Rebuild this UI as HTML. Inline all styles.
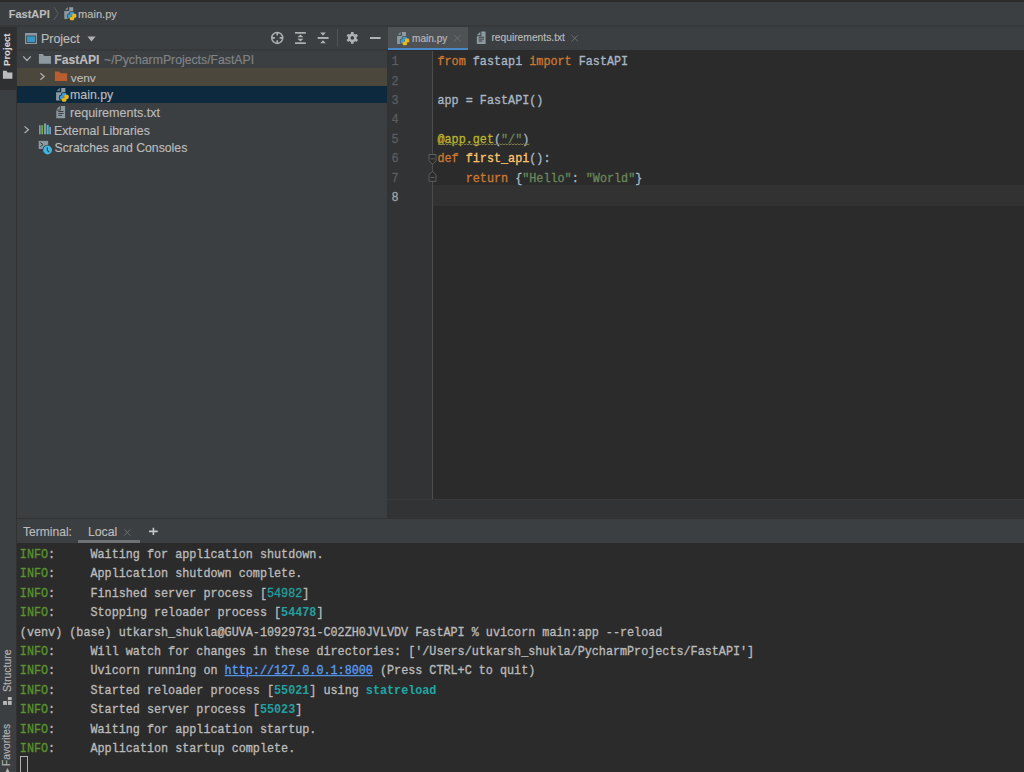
<!DOCTYPE html>
<html><head><meta charset="utf-8">
<style>
*{margin:0;padding:0;box-sizing:border-box}
html,body{width:1024px;height:772px;overflow:hidden;background:#3c3f41;font-family:"Liberation Sans",sans-serif;position:relative}
.r{position:absolute}
.t{position:absolute;line-height:0;white-space:pre;font-family:"Liberation Sans",sans-serif;-webkit-text-stroke:0.15px currentColor}
.m{position:absolute;white-space:pre;font-family:"Liberation Mono",monospace;font-size:11.78px;transform-origin:0 0;-webkit-text-stroke:0.3px currentColor}
.ln{color:#5a5d60}
.kw{color:#cc7832}
.tx{color:#a9b7c6}
.st{color:#6a8759}
.dec{color:#bbb529}
.fn{color:#ffc66d}
.info{color:#5a922d}
.tt{color:#bbbbbb}
.cy{color:#22a0a0;font-weight:bold;-webkit-text-stroke:0}
.cyr{color:#22a0a0}
.cyb{color:#1fa6a6;font-weight:bold;-webkit-text-stroke:0}
.lk{color:#589df6;text-decoration:underline}
svg{position:absolute;left:0;top:0}
</style></head><body>
<div class="r" style="left:0px;top:0px;width:1024px;height:2px;background:#2b2b2b;"></div>
<div class="r" style="left:0px;top:2px;width:1024px;height:23px;background:#3c3f41;"></div>
<div class="r" style="left:0px;top:26px;width:16px;height:746px;background:#3c3f41;"></div>
<div class="r" style="left:0px;top:27px;width:16px;height:63px;background:#2e3031;"></div>
<div class="r" style="left:16px;top:26px;width:1px;height:746px;background:#323232;"></div>
<div class="r" style="left:386px;top:26px;width:1px;height:492px;background:#323232;"></div>
<div class="r" style="left:17px;top:26px;width:370px;height:492px;background:#3c3f41;"></div>
<div class="r" style="left:17px;top:49px;width:370px;height:2px;background:#363839;"></div>
<div class="r" style="left:17px;top:68px;width:370px;height:18px;background:#4b473d;"></div>
<div class="r" style="left:17px;top:86px;width:370px;height:17px;background:#0d293e;"></div>
<div class="r" style="left:387px;top:26px;width:637px;height:492px;background:#2b2b2b;"></div>
<div class="r" style="left:387px;top:26px;width:637px;height:24px;background:#3c3f41;"></div>
<div class="r" style="left:388px;top:27px;width:80px;height:23px;background:#4e5254;"></div>
<div class="r" style="left:388px;top:47.8px;width:80px;height:2.7px;background:#4a88c7;"></div>
<div class="r" style="left:387px;top:50.5px;width:46px;height:448.5px;background:#313335;"></div>
<div class="r" style="left:432px;top:50.5px;width:1px;height:448.5px;background:#4a4c4e;"></div>
<div class="r" style="left:433px;top:185px;width:591px;height:21px;background:#323232;"></div>
<div class="r" style="left:387px;top:499px;width:637px;height:1px;background:#37393b;"></div>
<div class="r" style="left:387px;top:500px;width:637px;height:18px;background:#323335;"></div>
<div class="r" style="left:0px;top:25px;width:1024px;height:2px;background:#363839;"></div>
<div class="r" style="left:17px;top:518px;width:1007px;height:1px;background:#323232;"></div>
<div class="r" style="left:17px;top:519px;width:1007px;height:24px;background:#3c3f41;"></div>
<div class="r" style="left:17px;top:543px;width:1007px;height:229px;background:#2b2b2b;"></div>
<div class="r" style="left:78px;top:540px;width:62px;height:3px;background:#6e7275;"></div>
<div class="t" style="left:8.74px;top:13.69px;font-size:11.0px;color:#bbbbbb;font-weight:bold;">FastAPI</div>
<div class="t" style="left:78.09px;top:13.76px;font-size:11.07px;color:#bbbbbb;">main.py</div>
<div class="t" style="left:40.90px;top:39.02px;font-size:12.5px;color:#bbbbbb;">Project</div>
<div class="t" style="left:54.27px;top:60.29px;font-size:12.13px;color:#bbbbbb;font-weight:bold;">FastAPI</div>
<div class="t" style="left:104.01px;top:60.25px;font-size:12.25px;color:#808487;">~/PycharmProjects/FastAPI</div>
<div class="t" style="left:70.75px;top:77.90px;font-size:11.84px;color:#bbbbbb;">venv</div>
<div class="t" style="left:70.01px;top:95.47px;font-size:12.35px;color:#bbbbbb;">main.py</div>
<div class="t" style="left:70.00px;top:112.85px;font-size:12.55px;color:#bbbbbb;">requirements.txt</div>
<div class="t" style="left:54.01px;top:130.53px;font-size:12.32px;color:#bbbbbb;">External Libraries</div>
<div class="t" style="left:54.51px;top:148.45px;font-size:12.26px;color:#bbbbbb;">Scratches and Consoles</div>
<div class="t" style="left:412.00px;top:38.61px;font-size:10.08px;color:#bbbbbb;">main.py</div>
<div class="t" style="left:491.38px;top:38.14px;font-size:10.28px;color:#bbbbbb;">requirements.txt</div>
<div class="t" style="left:23.06px;top:531.62px;font-size:12.05px;color:#bbbbbb;">Terminal:</div>
<div class="t" style="left:87.90px;top:531.54px;font-size:12.3px;color:#bbbbbb;">Local</div>
<div class="t" style="left:6.77px;top:65.58px;font-size:9.59px;color:#d4d4d4;font-weight:bold;transform:rotate(-90deg);transform-origin:0 0">Project</div>
<div class="t" style="left:7.09px;top:691.72px;font-size:10.53px;color:#b4b4b4;transform:rotate(-90deg);transform-origin:0 0">Structure</div>
<div class="t" style="left:7.00px;top:765.82px;font-size:10.24px;color:#b4b4b4;transform:rotate(-90deg);transform-origin:0 0">Favorites</div>
<div class="m ln" style="left:391.5px;top:62.27px;line-height:0;transform:scaleY(1.1);transform-origin:0 3.135px">1</div>
<div class="m ln" style="left:391.5px;top:81.67px;line-height:0;transform:scaleY(1.1);transform-origin:0 3.135px">2</div>
<div class="m ln" style="left:391.5px;top:101.07px;line-height:0;transform:scaleY(1.1);transform-origin:0 3.135px">3</div>
<div class="m ln" style="left:391.5px;top:120.47px;line-height:0;transform:scaleY(1.1);transform-origin:0 3.135px">4</div>
<div class="m ln" style="left:391.5px;top:139.87px;line-height:0;transform:scaleY(1.1);transform-origin:0 3.135px">5</div>
<div class="m ln" style="left:391.5px;top:159.27px;line-height:0;transform:scaleY(1.1);transform-origin:0 3.135px">6</div>
<div class="m ln" style="left:391.5px;top:178.67px;line-height:0;transform:scaleY(1.1);transform-origin:0 3.135px">7</div>
<div class="m ln" style="left:391.5px;top:198.07px;line-height:0;transform:scaleY(1.1);transform-origin:0 3.135px"><span style="color:#a4a3a3">8</span></div>
<div class="m tx" style="left:437.5px;top:62.27px;line-height:0;transform:scaleY(1.1);transform-origin:0 3.135px"><span class="kw">from</span> fastapi <span class="kw">import</span> FastAPI</div>
<div class="m tx" style="left:437.5px;top:101.07px;line-height:0;transform:scaleY(1.1);transform-origin:0 3.135px">app = FastAPI()</div>
<div class="m tx" style="left:437.5px;top:139.87px;line-height:0;transform:scaleY(1.1);transform-origin:0 3.135px"><span class="dec">@app.get</span>(<span class="st">"/"</span>)</div>
<div class="m tx" style="left:437.5px;top:159.27px;line-height:0;transform:scaleY(1.1);transform-origin:0 3.135px"><span class="kw">def</span> <span class="fn">first_api</span>():</div>
<div class="m tx" style="left:437.5px;top:178.67px;line-height:0;transform:scaleY(1.1);transform-origin:0 3.135px">    <span class="kw">return</span> {<span class="st">"Hello"</span>: <span class="st">"World"</span>}</div>
<div class="m tt" style="left:19.85px;top:554.77px;line-height:0;transform:scaleY(1.1);transform-origin:0 3.135px"><span class="info">INFO</span>:     Waiting for application shutdown.</div>
<div class="m tt" style="left:19.85px;top:574.21px;line-height:0;transform:scaleY(1.1);transform-origin:0 3.135px"><span class="info">INFO</span>:     Application shutdown complete.</div>
<div class="m tt" style="left:19.85px;top:593.65px;line-height:0;transform:scaleY(1.1);transform-origin:0 3.135px"><span class="info">INFO</span>:     Finished server process [<span class="cyr">54982</span>]</div>
<div class="m tt" style="left:19.85px;top:613.09px;line-height:0;transform:scaleY(1.1);transform-origin:0 3.135px"><span class="info">INFO</span>:     Stopping reloader process [<span class="cy">54478</span>]</div>
<div class="m tt" style="left:19.85px;top:632.53px;line-height:0;transform:scaleY(1.1);transform-origin:0 3.135px">(venv) (base) utkarsh_shukla@GUVA-10929731-C02ZH0JVLVDV FastAPI % uvicorn main:app --reload</div>
<div class="m tt" style="left:19.85px;top:651.97px;line-height:0;transform:scaleY(1.1);transform-origin:0 3.135px"><span class="info">INFO</span>:     Will watch for changes in these directories: ['/Users/utkarsh_shukla/PycharmProjects/FastAPI']</div>
<div class="m tt" style="left:19.85px;top:671.41px;line-height:0;transform:scaleY(1.1);transform-origin:0 3.135px"><span class="info">INFO</span>:     Uvicorn running on <span class="lk">http://127.0.0.1:8000</span> (Press CTRL+C to quit)</div>
<div class="m tt" style="left:19.85px;top:690.85px;line-height:0;transform:scaleY(1.1);transform-origin:0 3.135px"><span class="info">INFO</span>:     Started reloader process [<span class="cy">55021</span>] using <span class="cyb">statreload</span></div>
<div class="m tt" style="left:19.85px;top:710.29px;line-height:0;transform:scaleY(1.1);transform-origin:0 3.135px"><span class="info">INFO</span>:     Started server process [<span class="cy">55023</span>]</div>
<div class="m tt" style="left:19.85px;top:729.73px;line-height:0;transform:scaleY(1.1);transform-origin:0 3.135px"><span class="info">INFO</span>:     Waiting for application startup.</div>
<div class="m tt" style="left:19.85px;top:749.17px;line-height:0;transform:scaleY(1.1);transform-origin:0 3.135px"><span class="info">INFO</span>:     Application startup complete.</div>
<div class="r" style="left:20px;top:756px;width:8px;height:16px;background:transparent;border:1.3px solid #b0b0b0;border-bottom:none"></div>
<svg width="1024" height="772" viewBox="0 0 1024 772">
<defs>
  <g id="pyicon">
    <path d="M0.8 2.6 L3.5 0 V2.6 Z" fill="#8d99a1"/>
    <path d="M4.9 0 H8.9 V11.9 H0 V3.9 H4.9 Z" fill="#8d99a1"/>
    <g fill="currentColor" stroke="currentColor" stroke-width="1.5">
      <rect x="5.5" y="4.7" width="4.4" height="3.4" rx="1.2"/>
      <rect x="3.5" y="7.1" width="4" height="4" rx="1.2"/>
      <rect x="7.9" y="6.5" width="4.2" height="4" rx="1.2"/>
      <rect x="5.5" y="9.7" width="4.4" height="3.4" rx="1.2"/>
    </g>
    <g fill="#3d9ad0">
      <rect x="5.5" y="4.7" width="4.4" height="3.4" rx="1.3"/>
      <rect x="3.5" y="7.1" width="4" height="4" rx="1.3"/>
      <rect x="5.5" y="6.5" width="2" height="2"/>
    </g>
    <g fill="#e9b816">
      <rect x="7.9" y="6.5" width="4.2" height="4" rx="1.3"/>
      <rect x="5.5" y="9.7" width="4.4" height="3.4" rx="1.3"/>
      <rect x="7.9" y="9.2" width="2" height="2"/>
    </g>
  </g>
  <g id="txticon">
    <path d="M0 3.6 L3.5 0.1 L3.5 3.6 Z" fill="#8d99a1"/>
    <path d="M4.5 0 H8.8 V12.3 H0 V4.6 H4.5 Z" fill="#8d99a1"/>
    <rect x="1.9" y="5.1" width="5.3" height="1" fill="#3c3f41"/>
    <rect x="1.9" y="7.0" width="5.3" height="1" fill="#3c3f41"/>
    <rect x="1.9" y="8.9" width="3.8" height="1" fill="#3c3f41"/>
  </g>
</defs>

<!-- breadcrumb -->
<path d="M54 7 L58 13.5 L54 20" fill="none" stroke="#5b5e61" stroke-width="1"/>
<use href="#pyicon" x="64.3" y="7.2" color="#3c3f41"/>

<!-- project header icon -->
<rect x="25" y="33" width="12" height="11" fill="#8d99a1"/>
<rect x="26.2" y="35.6" width="9.6" height="7.2" fill="#2b3a42"/>
<rect x="26.9" y="36.3" width="8.2" height="5.8" fill="#3b95c0"/>
<!-- dropdown triangle -->
<path d="M87.5 36.5 L95.6 36.5 L91.55 41.5 Z" fill="#afb1b3"/>

<!-- crosshair -->
<g stroke="#afb1b3" fill="none">
<circle cx="277.25" cy="37.9" r="5.5" stroke-width="1.5"/>
<path d="M277.25 32.4 V35.6 M277.25 40.2 V43.4 M271.75 37.9 H274.9 M279.6 37.9 H282.75" stroke-width="1.6"/>
</g>
<!-- expand all -->
<g fill="#afb1b3">
<rect x="295" y="32" width="10.8" height="1.7"/>
<rect x="295" y="42.3" width="10.8" height="1.7"/>
<path d="M300.4 34.6 L303.4 37.2 L297.4 37.2 Z"/>
<path d="M300.4 41.4 L303.4 38.8 L297.4 38.8 Z"/>
</g>
<!-- collapse all -->
<g fill="#afb1b3">
<rect x="317.7" y="37" width="10.9" height="1.9"/>
<path d="M320.2 32.4 L325.8 32.4 L323 35.8 Z"/>
<path d="M320.2 43.3 L325.8 43.3 L323 40.2 Z"/>
</g>
<!-- separator -->
<rect x="337" y="29" width="1" height="17.5" fill="#525557"/>
<!-- gear -->
<g fill="#afb1b3">
<circle cx="352.3" cy="37.9" r="4.4"/>
<g transform="translate(352.3 37.9)">
<rect x="-1.3" y="-5.9" width="2.6" height="11.8" rx="0.5"/>
<rect x="-1.3" y="-5.9" width="2.6" height="11.8" rx="0.5" transform="rotate(60)"/>
<rect x="-1.3" y="-5.9" width="2.6" height="11.8" rx="0.5" transform="rotate(120)"/>
</g>
<circle cx="352.3" cy="37.9" r="1.8" fill="#3c3f41"/>
</g>
<!-- minus -->
<rect x="370" y="37" width="10.6" height="2" fill="#afb1b3"/>

<!-- tree: FastAPI chevron down -->
<path d="M23.2 56.3 L27 60.5 L30.8 56.3" fill="none" stroke="#afb1b3" stroke-width="1.2"/>
<!-- gray folder -->
<path d="M38.9 53.9 H42.8 L44.2 55.9 H51 V63.8 H38.9 Z" fill="#8d99a1"/>
<!-- venv chevron right -->
<path d="M40.4 73.2 L44.2 76.5 L40.4 79.8" fill="none" stroke="#afb1b3" stroke-width="1.2"/>
<!-- orange folder -->
<path d="M54.9 71.5 H59.2 L60.6 73.2 H67.1 V81 H54.9 Z" fill="#b95e30"/>
<!-- main.py icon -->
<use href="#pyicon" transform="translate(56.1 88.1) scale(1.04)" color="#0d293e"/>
<!-- requirements icon -->
<use href="#txticon" x="56.3" y="105.9"/>
<!-- ext libs chevron -->
<path d="M24.6 126.4 L28.4 129.7 L24.6 133" fill="none" stroke="#afb1b3" stroke-width="1.2"/>
<!-- ext libs bars -->
<rect x="39" y="125.2" width="1.7" height="9.1" fill="#8d99a1"/>
<rect x="41.3" y="125.2" width="1.8" height="9.1" fill="#62b543"/>
<rect x="44" y="123.4" width="2.1" height="10.9" fill="#8d99a1"/>
<rect x="46.7" y="124.9" width="2" height="9.4" fill="#40b6e0"/>
<rect x="49.3" y="126.9" width="1.7" height="7.4" fill="#8d99a1"/>
<!-- scratches -->
<rect x="38.7" y="140.9" width="9.4" height="8.1" fill="#8d99a1"/>
<path d="M40.3 142.5 L43 144.6 L40.3 146.7" fill="none" stroke="#3c3f41" stroke-width="1"/>
<circle cx="47.6" cy="150" r="5.2" fill="#3c3f41"/>
<circle cx="47.6" cy="150" r="4.4" fill="#40b6e0"/>
<path d="M47.3 147.3 V150.3 L49.2 152.2" fill="none" stroke="#3c3f41" stroke-width="1.1"/>

<!-- tabs -->
<use href="#pyicon" x="397.1" y="32.1" color="#4e5254"/>
<path d="M454.2 35 L460.6 41.3 M460.6 35 L454.2 41.3" stroke="#6e7173" stroke-width="0.9"/>
<use href="#txticon" x="476.8" y="31.6"/>
<path d="M571.5 35.1 L578 41.5 M578 35.1 L571.5 41.5" stroke="#6e7173" stroke-width="0.9"/>

<!-- fold markers -->
<path d="M429 154.5 H436 V160.8 L432.5 164.3 L429 160.8 Z" fill="#2b2b2b" stroke="#5d5f61" stroke-width="1"/>
<rect x="430.5" y="158.3" width="4" height="1" fill="#5d5f61"/>
<path d="M429 181.3 H436 V174.8 L432.5 171.3 L429 174.8 Z" fill="#2b2b2b" stroke="#5d5f61" stroke-width="1"/>
<rect x="430.5" y="177" width="4" height="1" fill="#5d5f61"/>

<!-- squiggly under @app.get("/") -->
<path d="M438 144.9 l1.5 -1.1 l1.5 1.1 l1.5 -1.1 l1.5 1.1 l1.5 -1.1 l1.5 1.1 l1.5 -1.1 l1.5 1.1 l1.5 -1.1 l1.5 1.1 l1.5 -1.1 l1.5 1.1 l1.5 -1.1 l1.5 1.1 l1.5 -1.1 l1.5 1.1 l1.5 -1.1 l1.5 1.1 l1.5 -1.1 l1.5 1.1 l1.5 -1.1 l1.5 1.1 l1.5 -1.1 l1.5 1.1 l1.5 -1.1 l1.5 1.1 l1.5 -1.1 l1.5 1.1 l1.5 -1.1 l1.5 1.1 l1.5 -1.1 l1.5 1.1 l1.5 -1.1 l1.5 1.1 l1.5 -1.1 l1.5 1.1 l1.5 -1.1 l1.5 1.1 l1.5 -1.1 l1.5 1.1 l1.5 -1.1 l1.5 1.1 l1.5 -1.1 l1.5 1.1 l1.5 -1.1 l1.5 1.1 l1.5 -1.1 l1.5 1.1 l1.5 -1.1 l1.5 1.1 l1.5 -1.1 l1.5 1.1 l1.5 -1.1 l1.5 1.1 l1.5 -1.1 l1.5 1.1 l1.5 -1.1 l1.5 1.1 l1.5 -1.1 l1.5 1.1 l1.5 -1.1" fill="none" stroke="#85834f" stroke-width="0.9"/>

<!-- terminal header X and + -->
<path d="M124.2 529.3 L130.3 535.6 M130.3 529.3 L124.2 535.6" stroke="#6e7173" stroke-width="0.9"/>
<path d="M153.4 527.7 V535.1 M149.1 531.4 H157.7" stroke="#c9c9c9" stroke-width="1.6"/>

<!-- left stripe: folder icon -->
<path d="M2.9 70.8 H6.5 L7.6 72.4 H12.4 V78.7 H2.9 Z" fill="#bdbdbd"/>
<!-- structure icon -->
<rect x="7.9" y="697" width="3.8" height="3.1" fill="#b8b8b8"/>
<rect x="3.1" y="701" width="3.8" height="3.9" fill="#b8b8b8"/>
<rect x="7.9" y="701" width="3.8" height="3.9" fill="#b8b8b8"/>
<!-- favorites star (partial) -->
<path d="M7.5 768 L9.5 772 L5.5 772 Z" fill="#b0b0b0"/>
</svg>
</body></html>
